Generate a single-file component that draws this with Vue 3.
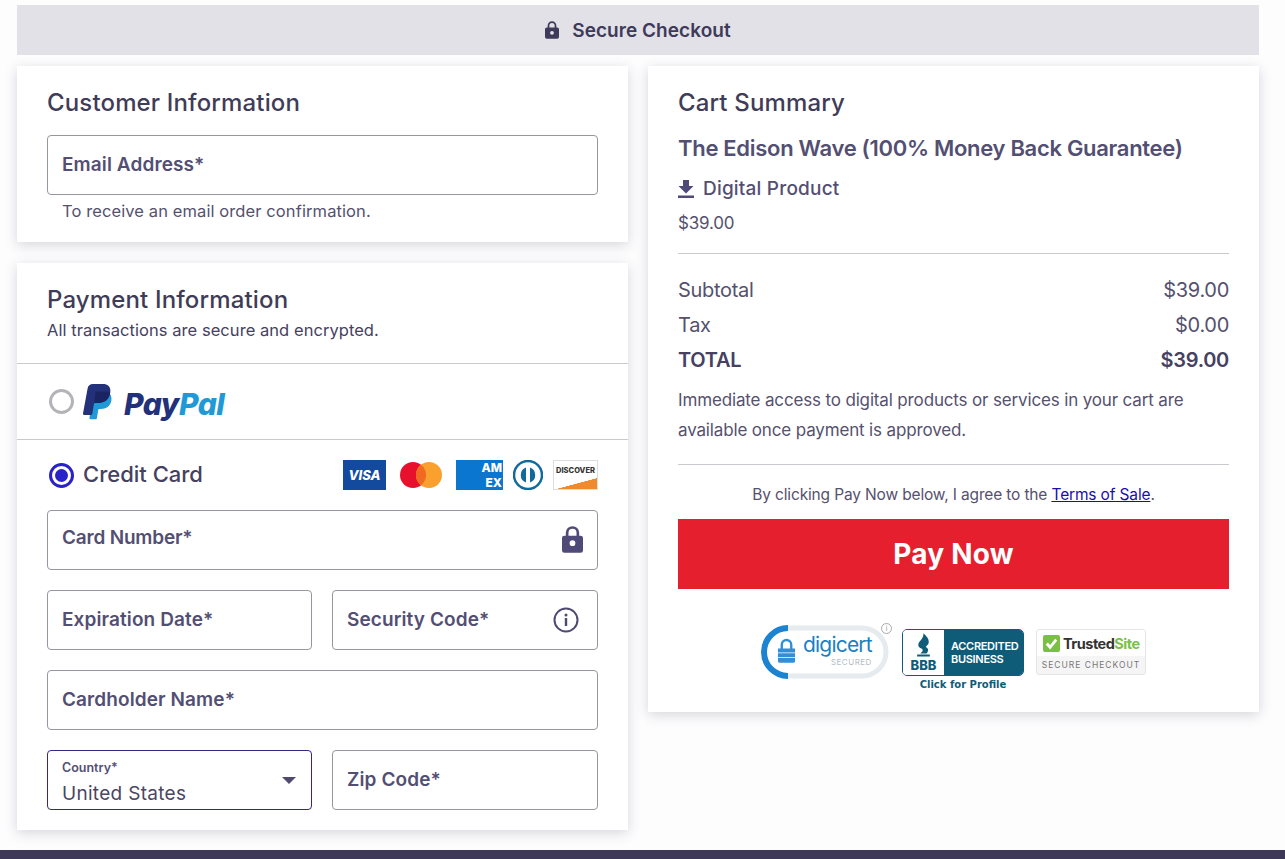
<template>
  <div class="page">
    <div class="banner">
      <svg class="banner-lock" viewBox="0 0 16 20" width="14" height="18"><path fill="#3f3a5a" fill-rule="evenodd" d="M8 0a5 5 0 0 1 5 5v2h1a2 2 0 0 1 2 2v9a2 2 0 0 1-2 2H2a2 2 0 0 1-2-2V9a2 2 0 0 1 2-2h1V5a5 5 0 0 1 5-5zm0 2a3 3 0 0 0-3 3v2h6V5a3 3 0 0 0-3-3zm0 9a2.2 2.2 0 1 0 0 4.400a2.200 2.200 0 0 0 0-4.400z"/></svg>
      <span>Secure Checkout</span>
    </div>

    <div class="columns">
      <div class="left-col">
        <section class="card customer">
          <h2>Customer Information</h2>
          <div class="field"><span class="field-label">Email Address*</span></div>
          <p class="hint">To receive an email order confirmation.</p>
        </section>

        <section class="card payment">
          <div class="pay-head">
            <h2>Payment Information</h2>
            <p class="secure-note">All transactions are secure and encrypted.</p>
          </div>

          <div class="paypal-row">
            <span class="radio"></span>
            <svg class="pp-mark" viewBox="0 0 30 36" width="30" height="36">
              <path fill="#1f9ad6" d="M25 8.500c2.500 1.500 4 4 3.400 7.800-1.100 6.200-5.300 8.700-10.600 8.700h-1.300c-.7 0-1.200.5-1.300 1.100l-1.300 8.200c-.1.500-.5.900-1 .9H7.300c-.6 0-1-.5-.9-1.100L11 8.500z"/>
              <path fill="#22317a" d="M9.800 0h10.100c5.300 0 8.300 3.100 7.300 8.700-1.200 7-5.700 10.200-11.800 10.200h-3.100c-.7 0-1.300.5-1.400 1.200l-1.600 10c-.1.500-.5.800-1 .8H1.100c-.7 0-1.200-.6-1.100-1.300L4.600 4.400C5 1.800 7.200 0 9.800 0z"/>
              <path fill="#1b2463" d="M11.200 18.900h3.900c6.100 0 10.900-3.100 12.100-10.200-1-.7-2.200-1.100-3.700-1.100H12.600z"/>
            </svg>
            <span class="pp-word"><span class="pp-dark">Pay</span><span class="pp-light">Pal</span></span>
          </div>

          <div class="credit-row">
            <div class="credit-label">
              <span class="radio checked"></span>
              <span class="credit-text">Credit Card</span>
            </div>
            <div class="brands">
              <span class="visa">VISA</span>
              <svg viewBox="0 0 44 28" width="44" height="28"><circle cx="14" cy="14" r="13" fill="#e8112d"/><circle cx="30" cy="14" r="13" fill="#f9a02f"/><path fill="#f26a21" d="M22 3.700a13 13 0 0 1 0 20.600 13 13 0 0 1 0-20.600z"/></svg>
              <span class="amex"><span>AM</span><span>EX</span></span>
              <svg viewBox="0 0 30 30" width="30" height="30"><circle cx="15" cy="15" r="14" fill="#fff" stroke="#0f6a9e" stroke-width="2.500"/><path fill="#0f6a9e" d="M13 7.500v15a8 8 0 0 1 0-15zm4 0a8 8 0 0 1 0 15z"/></svg>
              <span class="discover">DISCOVER</span>
            </div>
          </div>

          <div class="form">
            <div class="field full">
              <span class="field-label card-number">Card Number*</span>
              <svg class="field-icon lock-icon" viewBox="0 0 22 28" width="21" height="27"><path fill="#4f4a78" fill-rule="evenodd" d="M11 0a7 7 0 0 1 7 7v3h1.500A2.500 2.500 0 0 1 22 12.500v13a2.500 2.500 0 0 1-2.500 2.500h-17A2.500 2.500 0 0 1 0 25.500v-13A2.500 2.500 0 0 1 2.500 10H4V7a7 7 0 0 1 7-7zm0 2.800A4.200 4.200 0 0 0 6.800 7v3h8.400V7A4.200 4.200 0 0 0 11 2.800zm0 12a3 3 0 1 0 0 6 3 3 0 0 0 0-6z"/></svg>
            </div>
            <div class="field"><span class="field-label">Expiration Date*</span></div>
            <div class="field">
              <span class="field-label">Security Code*</span>
              <svg class="field-icon" viewBox="0 0 26 26" width="26" height="26"><circle cx="13" cy="13" r="11.500" fill="none" stroke="#4f4a70" stroke-width="2"/><circle cx="13" cy="8" r="1.500" fill="#4f4a70"/><rect x="11.800" y="11" width="2.400" height="8" fill="#4f4a70"/></svg>
            </div>
            <div class="field full"><span class="field-label">Cardholder Name*</span></div>
            <div class="field select">
              <span class="small-label">Country*</span>
              <span class="select-value">United States</span>
              <span class="caret"></span>
            </div>
            <div class="field"><span class="field-label">Zip Code*</span></div>
          </div>
        </section>
      </div>

      <section class="card summary">
        <h2>Cart Summary</h2>
        <div class="product-name">The Edison Wave (100% Money Back Guarantee)</div>
        <div class="digital">
          <svg viewBox="0 0 16 18" width="16" height="18"><path fill="#4f4a78" d="M5 0h6v6h4.500L8 13.500.5 6H5zM0 15.500h16V18H0z"/></svg>
          <span>Digital Product</span>
        </div>
        <div class="price">$39.00</div>
        <div class="totals">
          <div v-for="row in totals" :key="row.label" class="total-row" :class="{ grand: row.grand }">
            <span>{{ row.label }}</span><span>{{ row.value }}</span>
          </div>
        </div>
        <p class="access">Immediate access to digital products or services in your cart are available once payment is approved.</p>
        <p class="agree">By clicking Pay Now below, I agree to the <a href="#">Terms of Sale</a>.</p>
        <button class="pay-btn">Pay Now</button>
        <div class="badges">
          <div class="digicert">
            <svg class="dc-ring" viewBox="0 0 128 54" width="128" height="54"><rect x="3" y="3" width="122" height="48" rx="24" fill="#fff" stroke="#e6ebef" stroke-width="5"/><path fill="none" stroke="#1b83d0" stroke-width="6" d="M27 3a24 24 0 0 0 0 48"/></svg>
            <svg class="dc-lock" viewBox="0 0 20 26" width="19" height="25"><path fill="none" stroke="#2f8fd8" stroke-width="2.500" d="M5 12V7a5 5 0 0 1 10 0v5"/><path fill="#2f8fd8" d="M1 11h18v4H1zm0 5h18v4H1zm0 5h18v3a2 2 0 0 1-2 2H3a2 2 0 0 1-2-2z"/></svg>
            <div class="dc-text"><span class="dc-name">digicert</span><span class="dc-sub">SECURED</span></div>
            <span class="dc-info">i</span>
          </div>
          <div class="bbb">
            <div class="bbb-box">
              <div class="bbb-left">
                <svg viewBox="0 0 18 24" width="19" height="26"><path fill="#0f5c78" d="M9 0c3 3 5 5 5 8 0 2-1 3-3 5 3 1 3 4 1 6H6c3-2 3-4 0-5-3-2-2-5 0-7 2-2 3-4 3-7zM3 20h12v2H3z"/></svg>
                <span>BBB</span>
              </div>
              <div class="bbb-right"><span>ACCREDITED</span><span>BUSINESS</span></div>
            </div>
            <span class="bbb-link">Click for Profile</span>
          </div>
          <div class="trusted">
            <div class="ts-top">
              <svg viewBox="0 0 18 18" width="17" height="17"><rect width="18" height="18" rx="2" fill="#7ac143"/><path fill="none" stroke="#fff" stroke-width="3" d="M4 9l3.500 4L14 5"/></svg>
              <span class="ts-name">Trusted<em>Site</em></span>
            </div>
            <div class="ts-sub">SECURE CHECKOUT</div>
          </div>
        </div>
      </section>
    </div>

    <div class="footer-bar"></div>
  </div>
</template>

<script setup>
const totals = [
  { label: 'Subtotal', value: '$39.00' },
  { label: 'Tax', value: '$0.00' },
  { label: 'TOTAL', value: '$39.00', grand: true },
]
</script>

<style>
html, body { overflow: hidden; background: #fdfdfe; }
</style>

<style scoped>
.page { height: 859px; display: flex; flex-direction: column; font-family: Inter, "Noto Sans", sans-serif; color: #4a4664; overflow: hidden; }
.banner { margin: 5px 26px 0 17px; height: 50px; background: #e1e1e7; display: flex; align-items: center; justify-content: center; gap: 13px; font-size: 19px; font-weight: 600; letter-spacing: .05px; color: #3f3a5a; flex-shrink: 0; }
.banner-lock { margin-top: -1px; }
.columns { display: flex; gap: 20px; margin: 11px 26px 0 17px; align-items: flex-start; height: 784px; flex-shrink: 0; }
.left-col { width: 611px; display: flex; flex-direction: column; gap: 21px; }
.card { background: #fff; box-shadow: 0 3px 12px rgba(60, 60, 80, .2); }
h2 { margin: 0; font-size: 24px; line-height: 30px; font-weight: 500; letter-spacing: .15px; color: #3f3c58; }

.customer { height: 176px; padding: 22px 30px 0; box-sizing: border-box; }
.customer .field { margin-top: 17px; }
.hint { margin: 6px 0 0 15px; font-size: 16.500px; line-height: 20px; letter-spacing: .1px; color: #55516e; }

.field { position: relative; height: 60px; box-sizing: border-box; border: 1px solid #97959f; border-radius: 4px; background: #fff; display: flex; align-items: center; padding: 0 14px; }
.field-label { font-size: 19px; font-weight: 600; letter-spacing: .1px; color: #534f73; margin-top: -2px; }
.card-number { margin-top: -5px; letter-spacing: -.2px; }
.field-icon { position: absolute; right: 18px; top: 16px; }
.lock-icon { right: 14px; top: 15px; }

.payment { height: 567px; }
.pay-head { height: 101px; padding: 22px 30px 0; box-sizing: border-box; border-bottom: 1px solid #c9c9cf; }
.secure-note { margin: 5px 0 0; font-size: 16.500px; line-height: 20px; letter-spacing: .05px; color: #45415f; }
.paypal-row { height: 76px; box-sizing: border-box; border-bottom: 1px solid #c9c9cf; padding: 0 32px; display: flex; align-items: center; }
.radio { width: 25px; height: 25px; box-sizing: border-box; border: 3px solid #b4b4b8; border-radius: 50%; background: #fff; display: inline-block; flex-shrink: 0; }
.radio.checked { border-color: #2a22c9; position: relative; }
.radio.checked::after { content: ""; position: absolute; inset: 3px; border-radius: 50%; background: #2a22c9; }
.pp-mark { margin: 0 0 0 9px; }
.pp-word { margin: 4px 0 0 11px; font-size: 30px; font-weight: 800; font-style: italic; letter-spacing: -.5px; }
.pp-dark { color: #22317a; }
.pp-light { color: #1f9ad6; }

.credit-row { height: 70px; padding: 0 30px 0 32px; display: flex; align-items: center; justify-content: space-between; }
.credit-label { display: flex; align-items: center; gap: 9px; font-size: 22px; font-weight: 500; color: #45415f; }
.credit-text { margin-top: -2px; }
.brands { display: flex; align-items: center; gap: 13px; }
.visa { width: 43px; height: 30px; background: #144a9e; color: #fff; font-size: 13px; font-weight: 800; font-style: italic; display: flex; align-items: center; justify-content: center; }
.amex { width: 47px; height: 30px; box-sizing: border-box; padding-right: 1px; background: #0b76cf; color: #fff; font-size: 12px; line-height: 15px; font-weight: 800; display: flex; flex-direction: column; align-items: flex-end; justify-content: center; margin-right: -3px; }
.discover { width: 45px; height: 30px; box-sizing: border-box; border: 1px solid #ddd; padding-top: 5px; text-align: center; font-size: 7.500px; font-weight: 800; color: #333; background: linear-gradient(165deg, #fff 72%, #ef8a2f 73%); margin-left: -3px; }

.form { display: grid; grid-template-columns: 265px 266px; gap: 20px; padding: 0 30px; }
.full { grid-column: 1 / 3; }
.select { border-color: #2f2a86; flex-direction: column; align-items: flex-start; justify-content: flex-start; padding-top: 9px; }
.small-label { font-size: 12.500px; line-height: 15px; font-weight: 600; color: #534f73; }
.select-value { font-size: 19px; line-height: 24px; margin-top: 7px; letter-spacing: .3px; color: #4a4664; }
.caret { position: absolute; right: 15px; top: 26px; border: 7px solid transparent; border-top: 7px solid #4f4a6e; border-bottom: 0; }

.summary { width: 611px; height: 646px; box-sizing: border-box; padding: 22px 30px 0; }
.product-name { margin-top: 15px; font-size: 22px; line-height: 30px; font-weight: 600; letter-spacing: -.3px; color: #534f73; }
.digital { margin-top: 14px; display: flex; align-items: center; gap: 9px; font-size: 19px; line-height: 24px; font-weight: 500; letter-spacing: .2px; color: #534f73; }
.price { margin-top: 10px; font-size: 17px; line-height: 24px; letter-spacing: -.2px; color: #55516e; padding-bottom: 18px; border-bottom: 1px solid #c9c9cf; }
.totals { padding-top: 19px; }
.total-row { display: flex; justify-content: space-between; height: 35px; font-size: 20px; line-height: 35px; letter-spacing: -.3px; color: #55516e; }
.total-row.grand { font-weight: 600; color: #45415f; }
.access { margin: 7px 0 0; font-size: 17px; line-height: 30px; letter-spacing: -.15px; color: #55516e; padding-bottom: 19px; border-bottom: 1px solid #c9c9cf; }
.agree { margin: 19px 0 0; text-align: center; font-size: 15.500px; line-height: 22px; letter-spacing: -.15px; color: #55516e; }
.agree a { color: #1a0dab; }
.pay-btn { display: block; width: 100%; height: 70px; margin-top: 13px; border: 0; background: #e61f2e; color: #fff; font-family: inherit; font-size: 28px; font-weight: 700; letter-spacing: .2px; }

.badges { display: flex; justify-content: center; align-items: flex-start; gap: 13px; margin-top: 36px; }
.digicert { position: relative; width: 128px; height: 54px; }
.dc-ring { position: absolute; left: 0; top: 0; }
.dc-lock { position: absolute; left: 16px; top: 13px; }
.dc-text { position: absolute; left: 42px; top: 7px; display: flex; flex-direction: column; align-items: flex-end; }
.dc-name { font-size: 21px; line-height: 26px; letter-spacing: -.8px; color: #1b7fc4; }
.dc-sub { font-size: 8px; line-height: 9px; letter-spacing: .5px; color: #b5bcc2; }
.dc-info { position: absolute; right: -3px; top: -2px; width: 9px; height: 9px; border: 1px solid #aaa; border-radius: 50%; font-size: 7px; line-height: 9px; text-align: center; color: #999; }
.bbb { display: flex; flex-direction: column; align-items: center; margin-top: 4px; }
.bbb-box { width: 122px; height: 47px; box-sizing: border-box; border: 1px solid #0f5c78; border-radius: 5px; overflow: hidden; display: flex; }
.bbb-left { width: 41px; display: flex; flex-direction: column; align-items: center; font-size: 13px; line-height: 13px; font-weight: 800; color: #0f5c78; background: #fff; padding-top: 3px; box-sizing: border-box; }
.bbb-right { flex: 1; background: #0f5c78; color: #fff; font-size: 11px; line-height: 13px; font-weight: 600; letter-spacing: -.3px; display: flex; flex-direction: column; justify-content: center; padding-left: 7px; }
.bbb-link { margin-top: 2px; font-family: "DejaVu Sans", sans-serif; font-size: 10px; line-height: 14px; font-weight: 700; color: #0f5c78; }
.trusted { margin: 4px 0 0 -1px; width: 110px; height: 46px; box-sizing: border-box; border: 1px solid #e4e4e4; border-radius: 3px; overflow: hidden; background: #f5f5f5; }
.ts-top { height: 26px; background: #fff; display: flex; align-items: center; gap: 3px; padding-left: 6px; }
.ts-name { font-size: 14.500px; font-weight: 700; letter-spacing: -.5px; color: #333; }
.ts-name em { font-style: normal; color: #7ac143; }
.ts-sub { font-size: 8.500px; line-height: 18px; letter-spacing: 1px; text-align: center; color: #777; white-space: nowrap; }

.footer-bar { height: 9px; background: #3d3758; flex-shrink: 0; }
</style>
